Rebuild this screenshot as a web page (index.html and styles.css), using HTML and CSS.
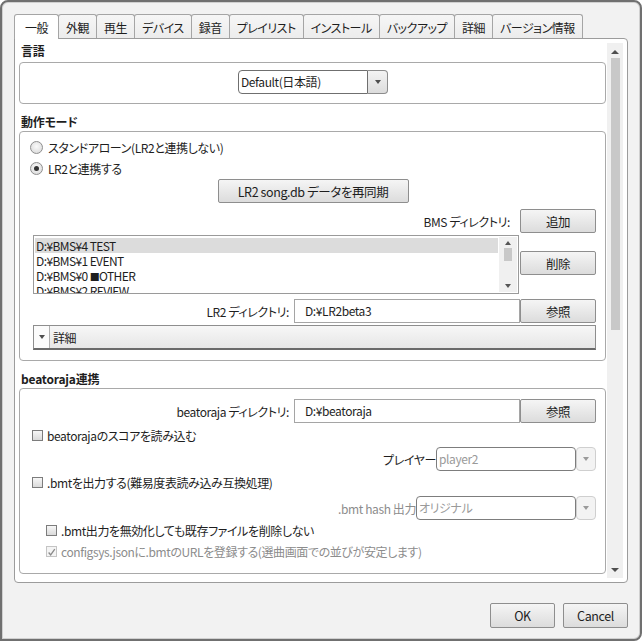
FILE: index.html
```html
<!DOCTYPE html>
<html lang="ja">
<head>
<meta charset="utf-8">
<title>設定</title>
<link rel="stylesheet" href="styles.css">
</head>
<body>
<div class="window">
  <div class="tabs">
    <div class="tab active">一般</div>
    <div class="tab">外観</div>
    <div class="tab">再生</div>
    <div class="tab">デバイス</div>
    <div class="tab">録音</div>
    <div class="tab">プレイリスト</div>
    <div class="tab">インストール</div>
    <div class="tab">バックアップ</div>
    <div class="tab">詳細</div>
    <div class="tab">バージョン情報</div>
  </div>
  <div class="panel">
    <div class="content">
      <div class="sec-title first">言語</div>
      <div class="box lang-box">
        <div class="combo lang-combo">
          <span class="combo-text">Default(日本語)</span>
          <span class="combo-btn"><span class="tri-down"></span></span>
        </div>
      </div>

      <div class="sec-title">動作モード</div>
      <div class="box mode-box">
        <div class="radio-row"><span class="radio"></span><span>スタンドアローン(LR2と連携しない)</span></div>
        <div class="radio-row"><span class="radio checked"></span><span>LR2と連携する</span></div>
        <div class="center-row"><div class="btn resync">LR2 song.db データを再同期</div></div>
        <div class="field-row bms-row"><span class="label gap10">BMS ディレクトリ:</span><div class="btn side">追加</div></div>
        <div class="list-row">
          <div class="list">
            <div class="list-items">
              <div class="item selected">D:¥BMS¥4 TEST</div>
              <div class="item">D:¥BMS¥1 EVENT</div>
              <div class="item">D:¥BMS¥0 <span class="sq">■</span>OTHER</div>
              <div class="item">D:¥BMS¥2 REVIEW</div>
            </div>
            <div class="list-scroll">
              <span class="tri-up small"></span>
              <span class="list-thumb"></span>
              <span class="tri-down small bottom"></span>
            </div>
          </div>
          <div class="list-side"><div class="btn side">削除</div></div>
        </div>
        <div class="field-row lr2-row"><span class="label">LR2 ディレクトリ:</span><div class="textfield">D:¥LR2beta3</div><div class="btn side">参照</div></div>
        <div class="titled"><span class="titled-arrow"><span class="tri-down"></span></span><span class="titled-text">詳細</span></div>
      </div>

      <div class="sec-title">beatoraja連携</div>
      <div class="box bj-box">
        <div class="field-row bj-dir"><span class="label">beatoraja ディレクトリ:</span><div class="textfield">D:¥beatoraja</div><div class="btn side">参照</div></div>
        <div class="check-row c-score"><span class="check"></span><span>beatorajaのスコアを読み込む</span></div>
        <div class="field-row player-row"><span class="label">プレイヤー</span>
          <div class="combo dis player-combo"><span class="combo-text">player2</span><span class="combo-btn"><span class="tri-down"></span></span></div>
        </div>
        <div class="check-row c-bmt"><span class="check"></span><span>.bmtを出力する(難易度表読み込み互換処理)</span></div>
        <div class="field-row hash-row"><span class="label muted">.bmt hash 出力</span>
          <div class="combo dis hash-combo"><span class="combo-text">オリジナル</span><span class="combo-btn"><span class="tri-down"></span></span></div>
        </div>
        <div class="check-row indent c-keep"><span class="check"></span><span>.bmt出力を無効化しても既存ファイルを削除しない</span></div>
        <div class="check-row indent c-url muted"><span class="check checked-dis"><svg width="11" height="11" viewBox="0 0 11 11"><path d="M2 5.5 L4.5 8.5 L9.5 1.5" fill="none" stroke="#8a8a8a" stroke-width="1.6"/></svg></span><span>configsys.jsonに.bmtのURLを登録する(選曲画面での並びが安定します)</span></div>
      </div>
    </div>
    <div class="vscroll">
      <span class="tri-up"></span>
      <span class="thumb"></span>
      <span class="tri-down bottom"></span>
    </div>
  </div>
  <div class="footer">
    <div class="btn foot">OK</div>
    <div class="btn foot">Cancel</div>
  </div>
</div>
</body>
</html>
```

FILE: styles.css
```css
* { box-sizing: border-box; }
html, body { margin: 0; padding: 0; background: #fff; }
body {
  font-family: "Noto Sans CJK JP", "Noto Sans", sans-serif;
  font-size: 12px;
  color: #1e1e1e;
  font-feature-settings: "palt";
  letter-spacing: -0.4px;
}
.window {
  width: 642px;
  height: 641px;
  border: 2px solid #707070;
  border-radius: 8px 8px 8px 0;
  background: #f2f2f2;
  box-shadow: inset 0 0 0 1px #d0d0d0;
  padding: 12px 12px 0 12px;
  display: flex;
  flex-direction: column;
}
.tabs {
  display: flex;
  align-items: flex-start;
  height: 24px;
  position: relative;
  z-index: 2;
}
.tab {
  height: 24px;
  padding: 2px 7px 0 7px;
  border: 1px solid #a5a5a5;
  border-bottom: none;
  margin-right: -1px;
  border-radius: 3px 3px 0 0;
  background: linear-gradient(#f6f6f6, #ececec);
  line-height: 21px;
  font-size: 12px;
  letter-spacing: -0.5px;
  white-space: nowrap;
}
.tab.active {
  background: #fff;
  height: 25px;
  padding-left: 10px;
  padding-right: 10px;
}
.panel {
  width: 614px;
  height: 545px;
  border: 1px solid #9c9c9c;
  border-radius: 0 4px 4px 4px;
  background: #fff;
  padding: 4px;
  display: flex;
  position: relative;
  z-index: 1;
}
.content {
  flex: 1;
  padding-right: 1px;
  overflow: hidden;
}
.vscroll {
  width: 16px;
  background: #f0f0f0;
  display: flex;
  flex-direction: column;
  align-items: center;
}
.tri-up, .tri-down {
  display: block;
  width: 0;
  height: 0;
  border-left: 4px solid transparent;
  border-right: 4px solid transparent;
}
.tri-up { border-bottom: 4px solid #4e4e4e; margin-top: 7px; }
.tri-down { border-top: 4px solid #4e4e4e; }
.tri-down.bottom { margin-top: auto; margin-bottom: 6px; }
.thumb {
  display: block;
  width: 9px;
  height: 272px;
  margin-top: 4px;
  background: #c8c8c8;
}
.sec-title {
  font-weight: bold;
  line-height: 16px;
  padding-left: 2px;
  margin-top: 10px;
  letter-spacing: -0.2px;
}
.sec-title.first { margin-top: 0; }
.box {
  margin-top: 1px;
  border: 1px solid #a9a9a9;
  border-radius: 4px;
  padding: 0 9px 0 10px;
}
.lang-box {
  margin-top: 3px;
  display: flex;
  justify-content: center;
  padding-top: 7px;
  padding-bottom: 9px;
}
.combo {
  display: flex;
  height: 24px;
  line-height: 22px;
}
.combo-text {
  flex: 1;
  background: #fff;
  border: 1px solid #6f6f6f;
  border-radius: 4px 0 0 4px;
  padding-left: 2px;
  white-space: nowrap;
}
.combo-btn {
  width: 20px;
  border: 1px solid #8c8c8c;
  border-left: none;
  border-radius: 0 4px 4px 0;
  background: linear-gradient(#f3f3f3, #dcdcdc);
  display: flex;
  align-items: center;
  justify-content: center;
}
.combo .tri-down { border-left-width: 3.5px; border-right-width: 3.5px; }
.lang-combo { width: 150px; }
.combo.dis .combo-text {
  color: #9a9a9a;
  border-color: #7d7d7d;
  border-radius: 4px;
}
.combo.dis .combo-btn {
  border: 1px solid #cfcfcf;
  border-radius: 4px;
  background: #f3f3f3;
}
.combo.dis .tri-down { border-top-color: #9a9a9a; }
.player-combo { width: 160px; }
.hash-combo { width: 180px; }

.mode-box { padding-top: 5px; padding-bottom: 10px; }
.radio-row, .check-row {
  display: flex;
  align-items: center;
  height: 21px;
  white-space: nowrap;
}
.radio {
  width: 13px;
  height: 13px;
  border-radius: 50%;
  border: 1px solid #8e8e8e;
  background: radial-gradient(circle at 50% 40%, #fafafa, #d6d6d6);
  margin-right: 5px;
  display: flex;
  align-items: center;
  justify-content: center;
}
.radio.checked::after {
  content: "";
  width: 5px;
  height: 5px;
  border-radius: 50%;
  background: #333;
}
.center-row { display: flex; justify-content: center; }
.btn {
  height: 24px;
  border: 1px solid #8e8e8e;
  border-radius: 2px;
  background: linear-gradient(#f5f5f5, #dcdcdc);
  display: flex;
  align-items: center;
  justify-content: center;
  white-space: nowrap;
  font-size: 12.5px;
}
.resync { width: 191px; }
.btn.side { width: 76px; }
.field-row {
  display: flex;
  justify-content: flex-end;
  align-items: center;
  white-space: nowrap;
}
.label { margin-right: 5px; }
.label.gap10 { margin-right: 10px; }
.player-row .label, .hash-row .label { margin-right: 0; }
.muted { color: #8c8c8c; }
.bms-row { margin-top: 6px; }
.list-row {
  display: flex;
  margin-top: 2px;
  margin-left: 3px;
}
.list {
  flex: 1;
  height: 59px;
  border: 1px solid #9a9a9a;
  margin-right: 1px;
  display: flex;
  overflow: hidden;
  background: #fff;
}
.list-items { flex: 1; padding: 2px 0 0 1px; }
.item {
  height: 15px;
  line-height: 15px;
  padding-left: 1px;
  white-space: nowrap;
  letter-spacing: -0.6px;
}
.sq { font-size: 10px; }
.item.selected { background: #dcdcdc; }
.list-scroll {
  width: 18px;
  margin: 1px;
  background: #f0f0f0;
  display: flex;
  flex-direction: column;
  align-items: center;
}
.tri-up.small { margin-top: 4px; border-left-width: 3.5px; border-right-width: 3.5px; border-bottom-width: 4px; border-bottom-color: #555; }
.tri-down.small { border-left-width: 3.5px; border-right-width: 3.5px; margin-bottom: 4px; border-top-color: #555; }
.list-thumb {
  display: block;
  width: 8px;
  height: 13px;
  margin-top: 3px;
  background: #c8c8c8;
}
.list-side { padding-top: 16px; }
.lr2-row { margin-top: 5px; }
.textfield {
  width: 226px;
  height: 24px;
  border: 1px solid #a5a5a5;
  background: #fff;
  padding-left: 10px;
  line-height: 22px;
}
.titled {
  margin-top: 2px;
  margin-left: 3px;
  height: 25px;
  border: 1px solid #8e8e8e;
  border-bottom: 2px solid #6a6a6a;
  background: linear-gradient(#f7f7f7, #e6e6e6);
  display: flex;
  align-items: center;
}
.titled-arrow {
  width: 16px;
  height: 100%;
  border-right: 1px solid #b0b0b0;
  background: #fbfbfb;
  display: flex;
  align-items: center;
  justify-content: center;
}
.titled-arrow .tri-down { border-left-width: 3.5px; border-right-width: 3.5px; }
.titled-text { margin-left: 3px; }

.bj-box { padding-top: 10px; padding-bottom: 12px; }
.check {
  width: 11px;
  height: 11px;
  border: 1px solid #7c7c7c;
  background: linear-gradient(#f7f7f7, #dadada);
  margin-right: 4px;
  margin-left: 2px;
  display: flex;
}
.check.checked-dis { border-color: #c4c4c4; background: #f4f4f4; }
.check-row.indent .check { margin-left: 16px; }
.c-score { margin-top: 2px; }
.player-row { margin-top: 1px; }
.c-bmt { margin-top: 1px; }
.hash-row { margin-top: 3px; }
.c-keep { height: 21px; }
.c-url { height: 20px; }

.footer {
  display: flex;
  justify-content: flex-end;
  gap: 8px;
  margin-top: 20px;
}
.btn.foot { width: 65px; height: 25px; }
```
